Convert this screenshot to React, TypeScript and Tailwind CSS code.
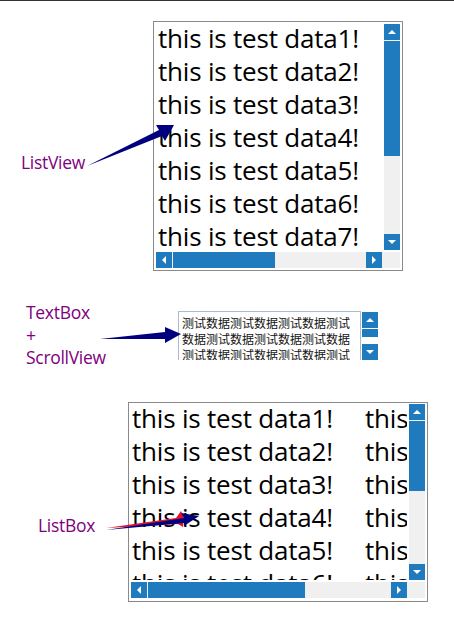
import React from 'react';

const rows = [1, 2, 3, 4, 5, 6, 7];
const btn = 'w-4 h-4 shrink-0 bg-[#1f7bbd] flex items-center justify-center';

function Tri({ dir }: { dir: 'up' | 'down' | 'left' | 'right' }) {
  const points = {
    up: '4,1 8,5 0,5',
    down: '0,1 8,1 4,5',
    left: '5,0 5,8 1,4',
    right: '1,0 1,8 5,4',
  }[dir];
  const size = dir === 'up' || dir === 'down' ? 'w-2 h-[6px]' : 'w-[6px] h-2';
  const box = dir === 'up' || dir === 'down' ? '0 0 8 6' : '0 0 6 8';
  return (
    <svg className={size} viewBox={box}>
      <polygon points={points} fill="#fff" />
    </svg>
  );
}

function VScroll({ thumb, height }: { thumb: string; height: string }) {
  return (
    <div className={`w-4 shrink-0 flex flex-col bg-[#f0f0f0] ${height}`}>
      <div className={btn}><Tri dir="up" /></div>
      <div className={`w-4 mt-px bg-[#1f7bbd] ${thumb}`} />
      <div className="flex-1" />
      <div className={btn}><Tri dir="down" /></div>
    </div>
  );
}

function HScroll({ thumb, width }: { thumb: string; width: string }) {
  return (
    <div className={`h-4 flex bg-[#f0f0f0] ${width}`}>
      <div className={btn}><Tri dir="left" /></div>
      <div className={`h-4 ml-px bg-[#1f7bbd] ${thumb}`} />
      <div className="flex-1" />
      <div className={btn}><Tri dir="right" /></div>
    </div>
  );
}

function Arrows() {
  return (
    <svg className="absolute inset-0 w-[454px] h-[634px] pointer-events-none" viewBox="0 0 454 634">
      <polygon points="87,166 159,130 156,125 174,125 165,141 162,136" fill="#00007f" />
      <polygon points="100,339 165,332 165,327 181,334 165,343 165,339" fill="#00007f" />
      <polygon points="106,528 176,518 181,511 184,518 183,527 178,524" fill="#e8102a" />
      <polygon points="106,530 184,518 181,513 199,516 184,526 184,523" fill="#00007f" />
    </svg>
  );
}

export default function App() {
  const listText = "text-[26px] leading-[33px] text-black font-['Open_Sans','Noto_Sans',sans-serif] tracking-[-0.2px] whitespace-nowrap";
  const label = "text-[#800080] text-[17.5px] leading-[22.5px] font-['Open_Sans','Noto_Sans',sans-serif] tracking-[-0.3px]";
  return (
    <div className="relative w-[454px] h-[634px] bg-white overflow-hidden">
      <div className="h-px bg-[#333]" />

      {/* ListView */}
      <div className="flex mt-5 pl-[21px]">
        <div className={`${label} w-[132px] mt-[130px]`}>ListView</div>
        <div className="w-[250px] h-[250px] border border-[#8a8a8a] pl-[2px] pr-[2px] pt-[2px] bg-white flex flex-col">
          <div className="flex h-[226px] gap-[2px]">
            <div className={`${listText} w-[226px] h-[226px] overflow-hidden pl-[2px]`}>
              <div className="-mt-[2px]">
                {rows.map((n) => (
                  <div key={n}>this is test data{n}!</div>
                ))}
              </div>
            </div>
            <VScroll thumb="h-[115px]" height="h-[226px]" />
          </div>
          <div className="flex mt-[2px] bg-[#f0f0f0]">
            <HScroll thumb="w-[102px]" width="w-[226px]" />
          </div>
        </div>
      </div>

      {/* TextBox + ScrollView */}
      <div className="flex h-[49px] mt-[40px] pl-[26px]">
        <div className={`${label} w-[152px] -mt-[10px]`}>
          <div>TextBox</div>
          <div>+</div>
          <div>ScrollView</div>
        </div>
        <div className="w-[183px] h-[49px] border-t border-l border-r border-[#a9bcd0] overflow-hidden pl-[3px] pt-[3px] text-[12px] leading-[16px] text-[#111] font-['Noto_Sans_CJK_SC',sans-serif] whitespace-nowrap">
          <div>测试数据测试数据测试数据测试</div>
          <div>数据测试数据测试数据测试数据</div>
          <div>测试数据测试数据测试数据测试</div>
        </div>
        <div className="w-4 h-[48px] ml-px mt-px flex flex-col">
          <div className={btn}><Tri dir="up" /></div>
          <div className="h-2 w-4 mt-px bg-[#1f7bbd]" />
          <div className="flex-1" />
          <div className={btn}><Tri dir="down" /></div>
        </div>
      </div>

      {/* ListBox */}
      <div className="flex mt-[42px] pl-[38px]">
        <div className={`${label} w-[90px] mt-[112px]`}>ListBox</div>
        <div className="w-[300px] h-[200px] border border-[#8a8a8a] pl-[2px] pr-[2px] pt-[1px] flex flex-col">
          <div className="flex h-[176px] gap-[2px]">
            <div className={`${listText} w-[276px] h-[176px] overflow-hidden pl-[1px]`}>
              <div className="-mt-[2px]">
                {[1, 2, 3, 4, 5, 6].map((n) => (
                  <div key={n} className="flex">
                    <div className="w-[233px] shrink-0">this is test data{n}!</div>
                    <div>this is test data{n}!</div>
                  </div>
                ))}
              </div>
            </div>
            <VScroll thumb="h-[70px]" height="h-[176px]" />
          </div>
          <div className="flex mt-[2px] bg-[#f0f0f0] pr-[18px]">
            <HScroll thumb="w-[157px]" width="w-[276px]" />
          </div>
        </div>
      </div>

      <Arrows />
    </div>
  );
}
